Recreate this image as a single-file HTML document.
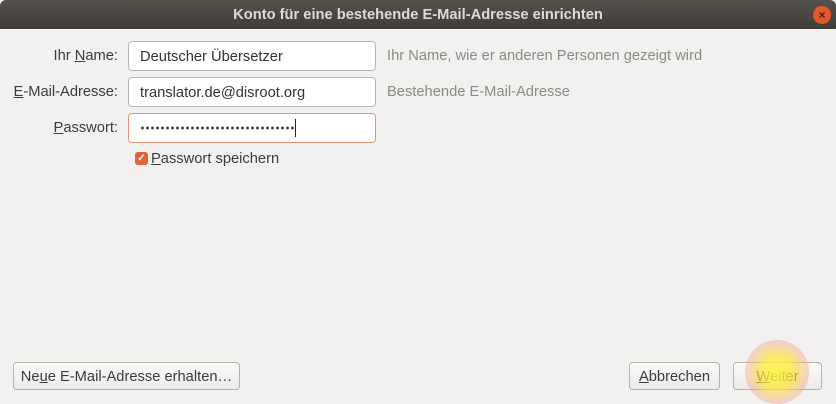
<!DOCTYPE html>
<html><head><meta charset="utf-8"><style>
*{box-sizing:border-box;margin:0;padding:0}
body{width:836px;height:400px;background:#f2f1f0;font-family:"Liberation Sans",sans-serif;font-size:14.7px;color:#3c3c3c;position:relative;overflow:hidden}
.title{position:absolute;left:0;top:0;width:836px;height:29px;background:linear-gradient(#55524c,#3f3d39);border-radius:6px 6px 0 0;color:#dfdbd2;font-weight:bold;font-size:14.7px;text-align:center;line-height:31px}
.close{position:absolute;left:813px;top:6px;width:18px;height:18px;border-radius:50%;background:#e45527;color:#3a2a20;font-size:12px;line-height:18px;text-align:center;font-weight:bold}
.lbl{position:absolute;right:718px;text-align:right;white-space:nowrap}
.inp{position:absolute;left:128px;width:248px;height:30px;border:1px solid #b8b5b0;border-radius:4px;background:#fff;padding-left:11px;line-height:30px;color:#333}
.hint{position:absolute;left:387px;color:#8a8a86}
.btn{position:absolute;height:28px;border:1px solid #b5b2ad;border-radius:4px;background:linear-gradient(#fafaf9,#ecebea);text-align:center;line-height:28px;color:#3c3c3c}
u{text-decoration:underline}
</style></head><body>
<div class="title">Konto für eine bestehende E-Mail-Adresse einrichten</div>
<div class="close">×</div>
<div class="lbl" style="top:48px">Ihr <u>N</u>ame:</div>
<div class="lbl" style="top:84px"><u>E</u>-Mail-Adresse:</div>
<div class="lbl" style="top:120px"><u>P</u>asswort:</div>
<div class="inp" style="top:41px">Deutscher Übersetzer</div>
<div class="inp" style="top:77px">translator.de@disroot.org</div>
<div class="inp" style="top:113px;border-color:#e8927a"></div>
<div style="position:absolute;left:140px;top:126px;width:154px;height:4px;background:radial-gradient(circle,#444 1.3px,transparent 1.6px) 0 0/5px 4px repeat-x"></div>
<div style="position:absolute;left:295px;top:119px;width:1px;height:18px;background:#222"></div>
<div class="hint" style="top:48px">Ihr Name, wie er anderen Personen gezeigt wird</div>
<div class="hint" style="top:84px">Bestehende E-Mail-Adresse</div>
<div style="position:absolute;left:135px;top:152px;width:13px;height:13px;border-radius:3px;background:#e0653a;color:#fff;font-size:10px;line-height:13px;text-align:center;font-weight:bold">✓</div>
<div style="position:absolute;left:151px;top:151px"><u>P</u>asswort speichern</div>
<div class="btn" style="left:13px;top:362px;width:227px">Ne<u>u</u>e E-Mail-Adresse erhalten…</div>
<div class="btn" style="left:629px;top:362px;width:91px"><u>A</u>bbrechen</div>
<div class="btn" style="left:733px;top:362px;width:89px"><u>W</u>eiter</div>
<div style="position:absolute;left:745px;top:340px;width:64px;height:64px;border-radius:50%;background:radial-gradient(circle,rgba(255,245,60,.9) 0,rgba(255,230,60,.75) 35%,rgba(240,140,140,.35) 70%,rgba(240,160,160,0) 100%)"></div>
</body></html>
